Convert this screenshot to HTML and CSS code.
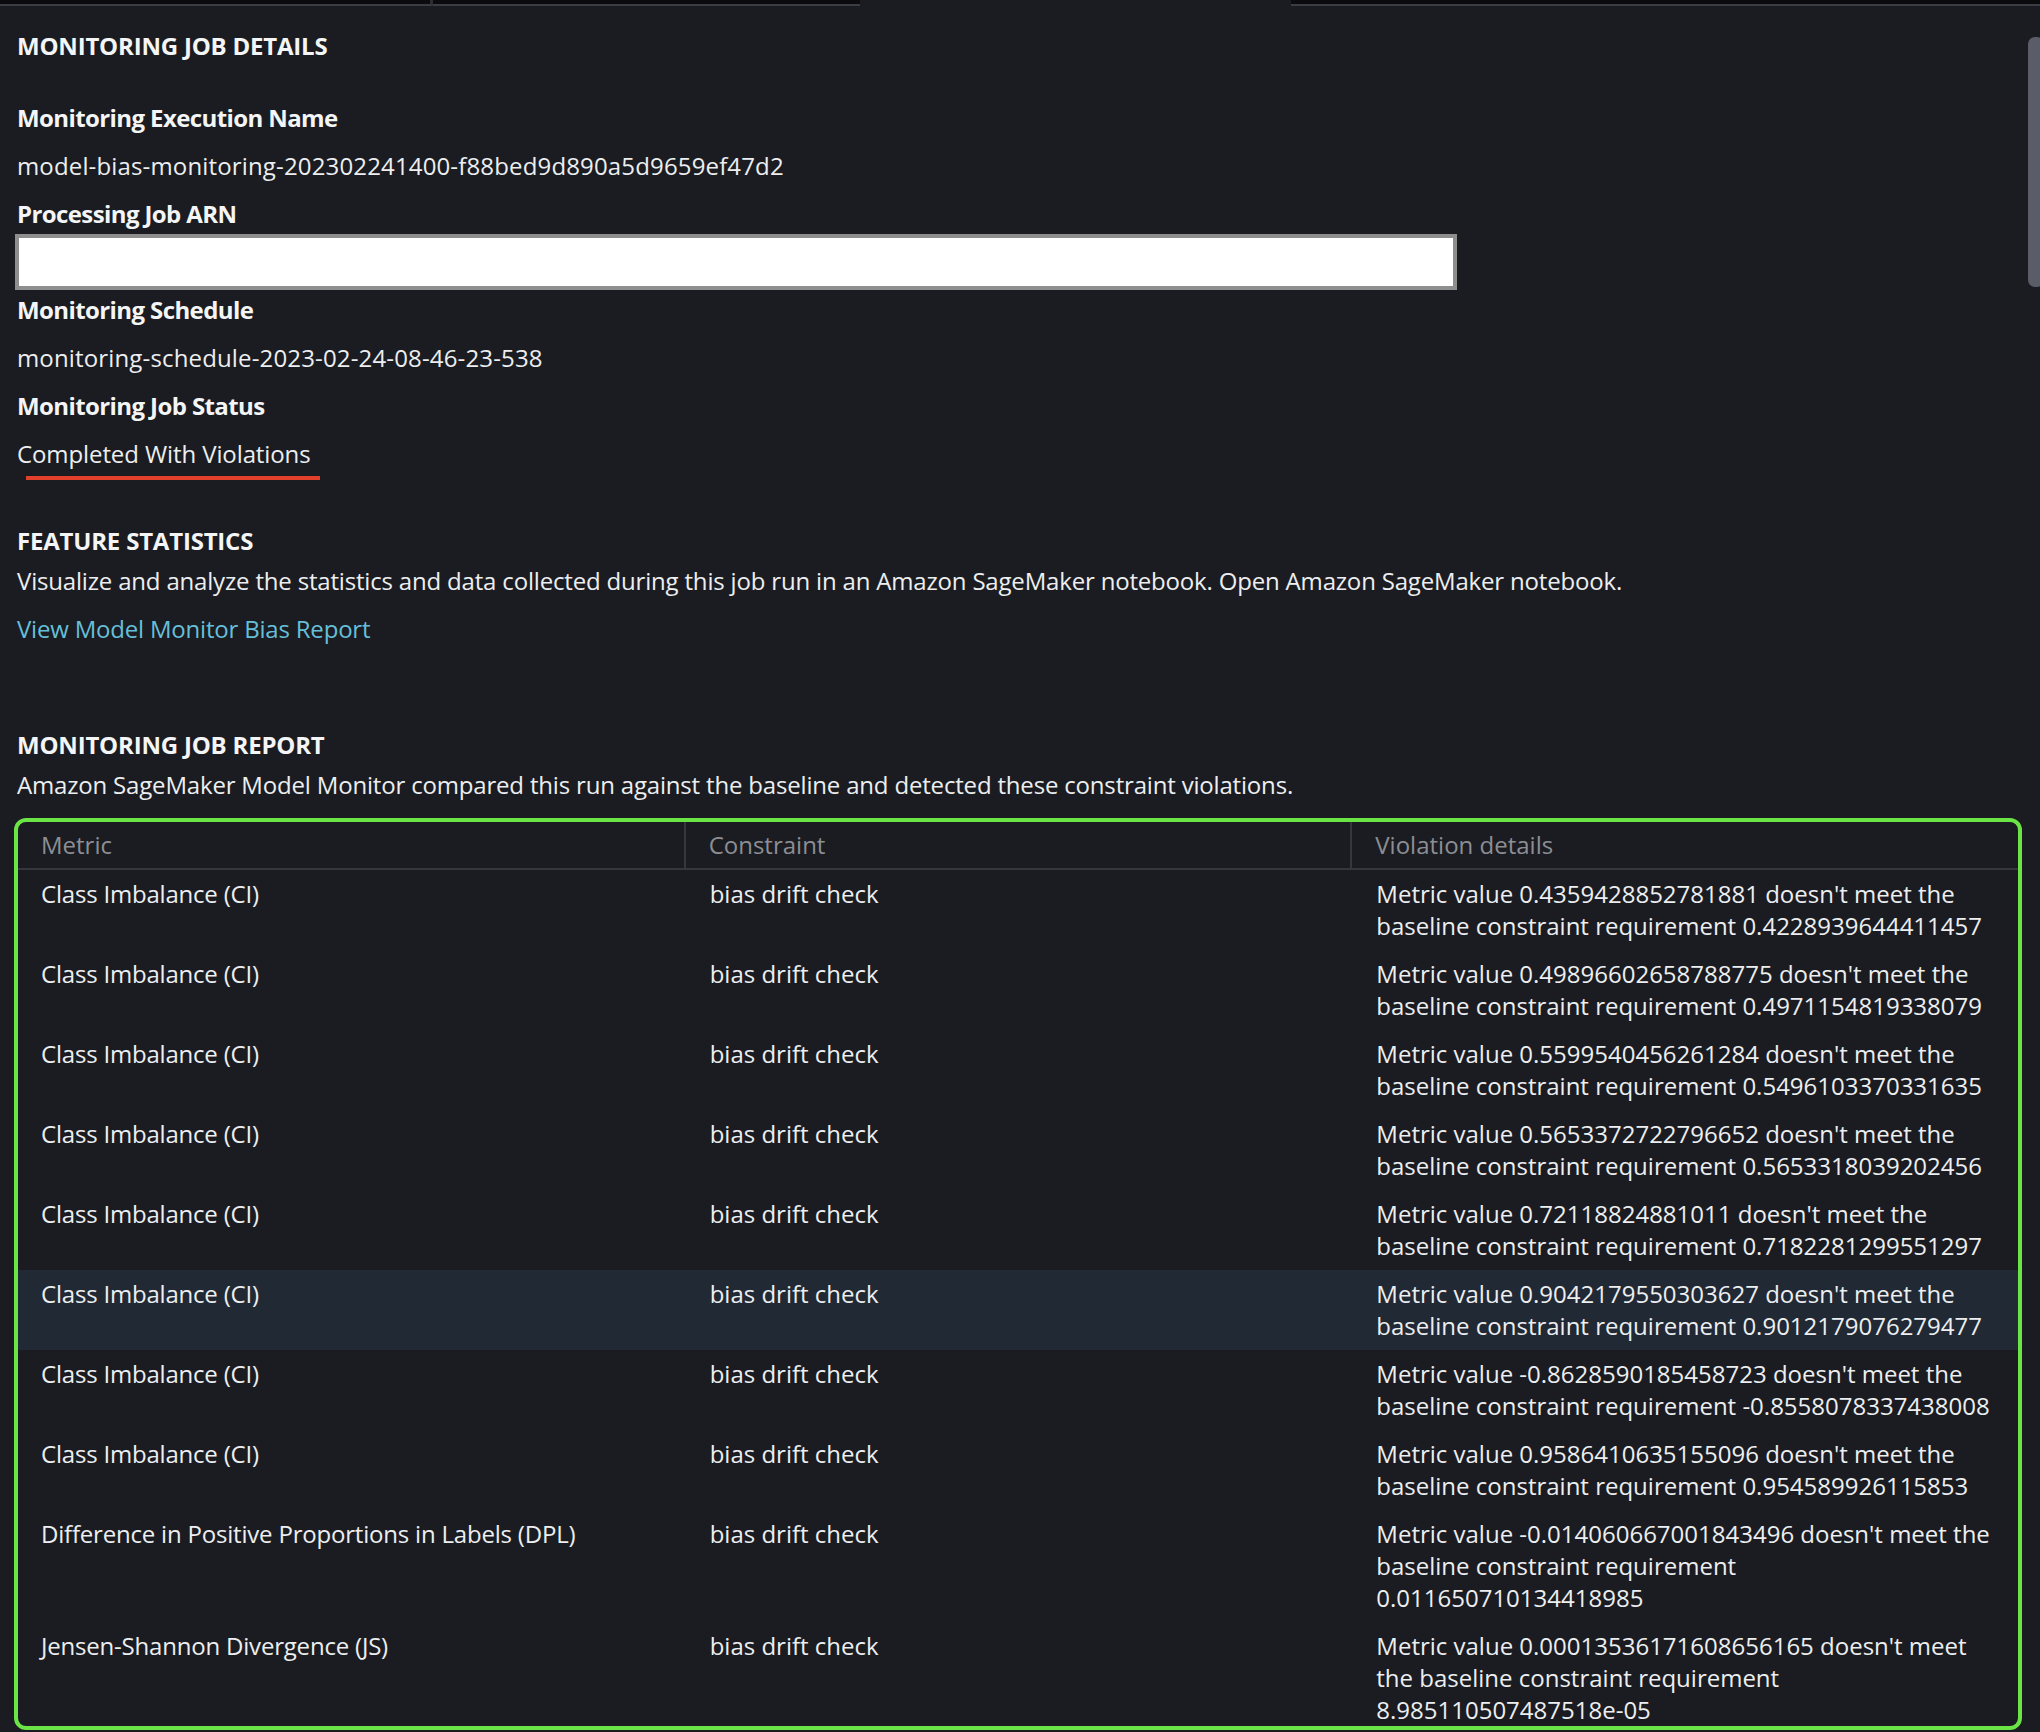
FILE: index.html
```html
<!DOCTYPE html>
<html lang="en">
<head>
<meta charset="utf-8">
<title>Monitoring Job Details</title>
<link rel="stylesheet" href="styles.css">
</head>
<body>
<div class="tabs">
  <div class="tab tab-first"></div>
  <div class="tab tab-second"></div>
  <div class="tab tab-active"></div>
  <div class="tab tab-rest"></div>
</div>
<div class="scroll-thumb"></div>
<main class="content">
  <section class="details">
    <h2 class="section-title">MONITORING JOB DETAILS</h2>
    <div class="fields">
      <div class="label">Monitoring Execution Name</div>
      <div class="value">model-bias-monitoring-202302241400-f88bed9d890a5d9659ef47d2</div>
      <div class="label">Processing Job ARN</div>
      <div class="arn-box"></div>
      <div class="label">Monitoring Schedule</div>
      <div class="value">monitoring-schedule-2023-02-24-08-46-23-538</div>
      <div class="label">Monitoring Job Status</div>
      <div class="value"><span class="status">Completed With Violations</span></div>
    </div>
  </section>

  <section class="stats">
    <h2 class="section-title">FEATURE STATISTICS</h2>
    <p class="desc">Visualize and analyze the statistics and data collected during this job run in an Amazon SageMaker notebook. Open Amazon SageMaker notebook.</p>
    <a class="link" href="#">View Model Monitor Bias Report</a>
  </section>

  <section class="report">
    <h2 class="section-title">MONITORING JOB REPORT</h2>
    <p class="desc">Amazon SageMaker Model Monitor compared this run against the baseline and detected these constraint violations.</p>
    <div class="table-frame">
      <table class="violations">
        <thead>
          <tr><th>Metric</th><th>Constraint</th><th>Violation details</th></tr>
        </thead>
        <tbody>
          <tr><td>Class Imbalance (CI)</td><td>bias drift check</td><td class="detail">Metric value 0.4359428852781881 doesn't meet the<br>baseline constraint requirement 0.4228939644411457</td></tr>
          <tr><td>Class Imbalance (CI)</td><td>bias drift check</td><td class="detail">Metric value 0.49896602658788775 doesn't meet the<br>baseline constraint requirement 0.4971154819338079</td></tr>
          <tr><td>Class Imbalance (CI)</td><td>bias drift check</td><td class="detail">Metric value 0.5599540456261284 doesn't meet the<br>baseline constraint requirement 0.5496103370331635</td></tr>
          <tr><td>Class Imbalance (CI)</td><td>bias drift check</td><td class="detail">Metric value 0.5653372722796652 doesn't meet the<br>baseline constraint requirement 0.5653318039202456</td></tr>
          <tr><td>Class Imbalance (CI)</td><td>bias drift check</td><td class="detail">Metric value 0.72118824881011 doesn't meet the<br>baseline constraint requirement 0.7182281299551297</td></tr>
          <tr class="hovered"><td>Class Imbalance (CI)</td><td>bias drift check</td><td class="detail">Metric value 0.9042179550303627 doesn't meet the<br>baseline constraint requirement 0.9012179076279477</td></tr>
          <tr><td>Class Imbalance (CI)</td><td>bias drift check</td><td class="detail">Metric value -0.8628590185458723 doesn't meet the<br>baseline constraint requirement -0.8558078337438008</td></tr>
          <tr><td>Class Imbalance (CI)</td><td>bias drift check</td><td class="detail">Metric value 0.9586410635155096 doesn't meet the<br>baseline constraint requirement 0.954589926115853</td></tr>
          <tr><td>Difference in Positive Proportions in Labels (DPL)</td><td>bias drift check</td><td class="detail">Metric value -0.014060667001843496 doesn't meet the<br>baseline constraint requirement<br>0.011650710134418985</td></tr>
          <tr class="last"><td>Jensen-Shannon Divergence (JS)</td><td>bias drift check</td><td class="detail">Metric value 0.00013536171608656165 doesn't meet<br>the baseline constraint requirement<br>8.985110507487518e-05</td></tr>
        </tbody>
      </table>
    </div>
  </section>
</main>
</body>
</html>
```

FILE: styles.css
```css
* { box-sizing: border-box; }

html, body {
  margin: 0;
  padding: 0;
  background: #1b1c21;
}

body {
  position: relative;
  font-family: "Open Sans", "Noto Sans", sans-serif;
  font-size: 24px;
  line-height: 32px;
  color: #eceef0;
  overflow: hidden;
}

.tabs {
  display: flex;
  height: 6px;
}

.tab {
  height: 6px;
  background: #0b0b0e;
  border-bottom: 2px solid #3a3c44;
}

.tab-first {
  width: 433px;
  border-right: 3px solid #2c2e35;
}

.tab-second {
  width: 427px;
}

.tab-active {
  width: 431px;
  background: transparent;
  border-bottom: none;
}

.tab-rest {
  flex: 1;
}

.scroll-thumb {
  position: absolute;
  top: 37px;
  left: 2028px;
  width: 16px;
  height: 250px;
  border-radius: 7px;
  background: #5a5d68;
}

.content {
  padding: 24px 17px 0 17px;
}

.section-title {
  margin: 0;
  font-size: 24px;
  line-height: 32px;
  font-weight: 700;
  letter-spacing: -0.2px;
  color: #f4f5f6;
}

.fields {
  display: flex;
  flex-direction: column;
  gap: 16px;
  margin-top: 40px;
}

.label {
  font-weight: 700;
  letter-spacing: -0.6px;
  color: #f4f5f6;
}

.value {
  color: #eceef0;
  letter-spacing: 0.15px;
}

.arn-box {
  height: 56px;
  width: 1442px;
  margin: -12px 0 -12px -2px;
  background: #ffffff;
  border: 4px solid #8e8e8e;
}

.status {
  position: relative;
  display: inline-block;
  letter-spacing: -0.1px;
}

.status::after {
  content: "";
  position: absolute;
  left: 9px;
  top: 38px;
  width: 294px;
  height: 4px;
  background: #e3402b;
}

.stats {
  margin-top: 55px;
}

.desc {
  margin: 8px 0 0 0;
  letter-spacing: -0.18px;
}

.link {
  display: block;
  margin-top: 16px;
  color: #66bfd9;
  text-decoration: none;
  letter-spacing: -0.2px;
}

.report {
  margin-top: 84px;
}

.report .desc {
  margin-bottom: 17px;
}

.table-frame {
  margin: 0 1px 0 -3px;
  border: 4px solid #6be445;
  border-radius: 12px;
  overflow: hidden;
}

.violations {
  width: 100%;
  border-collapse: collapse;
  table-layout: fixed;
}

.violations th {
  text-align: left;
  font-weight: 400;
  color: #8c8e94;
  padding: 7px 24px 7px 23px;
  border-bottom: 2px solid #35373e;
  border-left: 2px solid #35373e;
}

.violations th:first-child {
  border-left: none;
}

.violations td {
  vertical-align: top;
  padding: 8px 24px 8px 23px;
  color: #eceef0;
}

.violations td:nth-child(1) {
  letter-spacing: -0.2px;
}

.violations td:nth-child(2),
.violations td:nth-child(3) {
  padding-left: 25px;
}

.violations td.detail {
  white-space: nowrap;
}

.violations tr.hovered td {
  background: #212934;
}

.violations tr.last td {
  padding-bottom: 0;
}
```
